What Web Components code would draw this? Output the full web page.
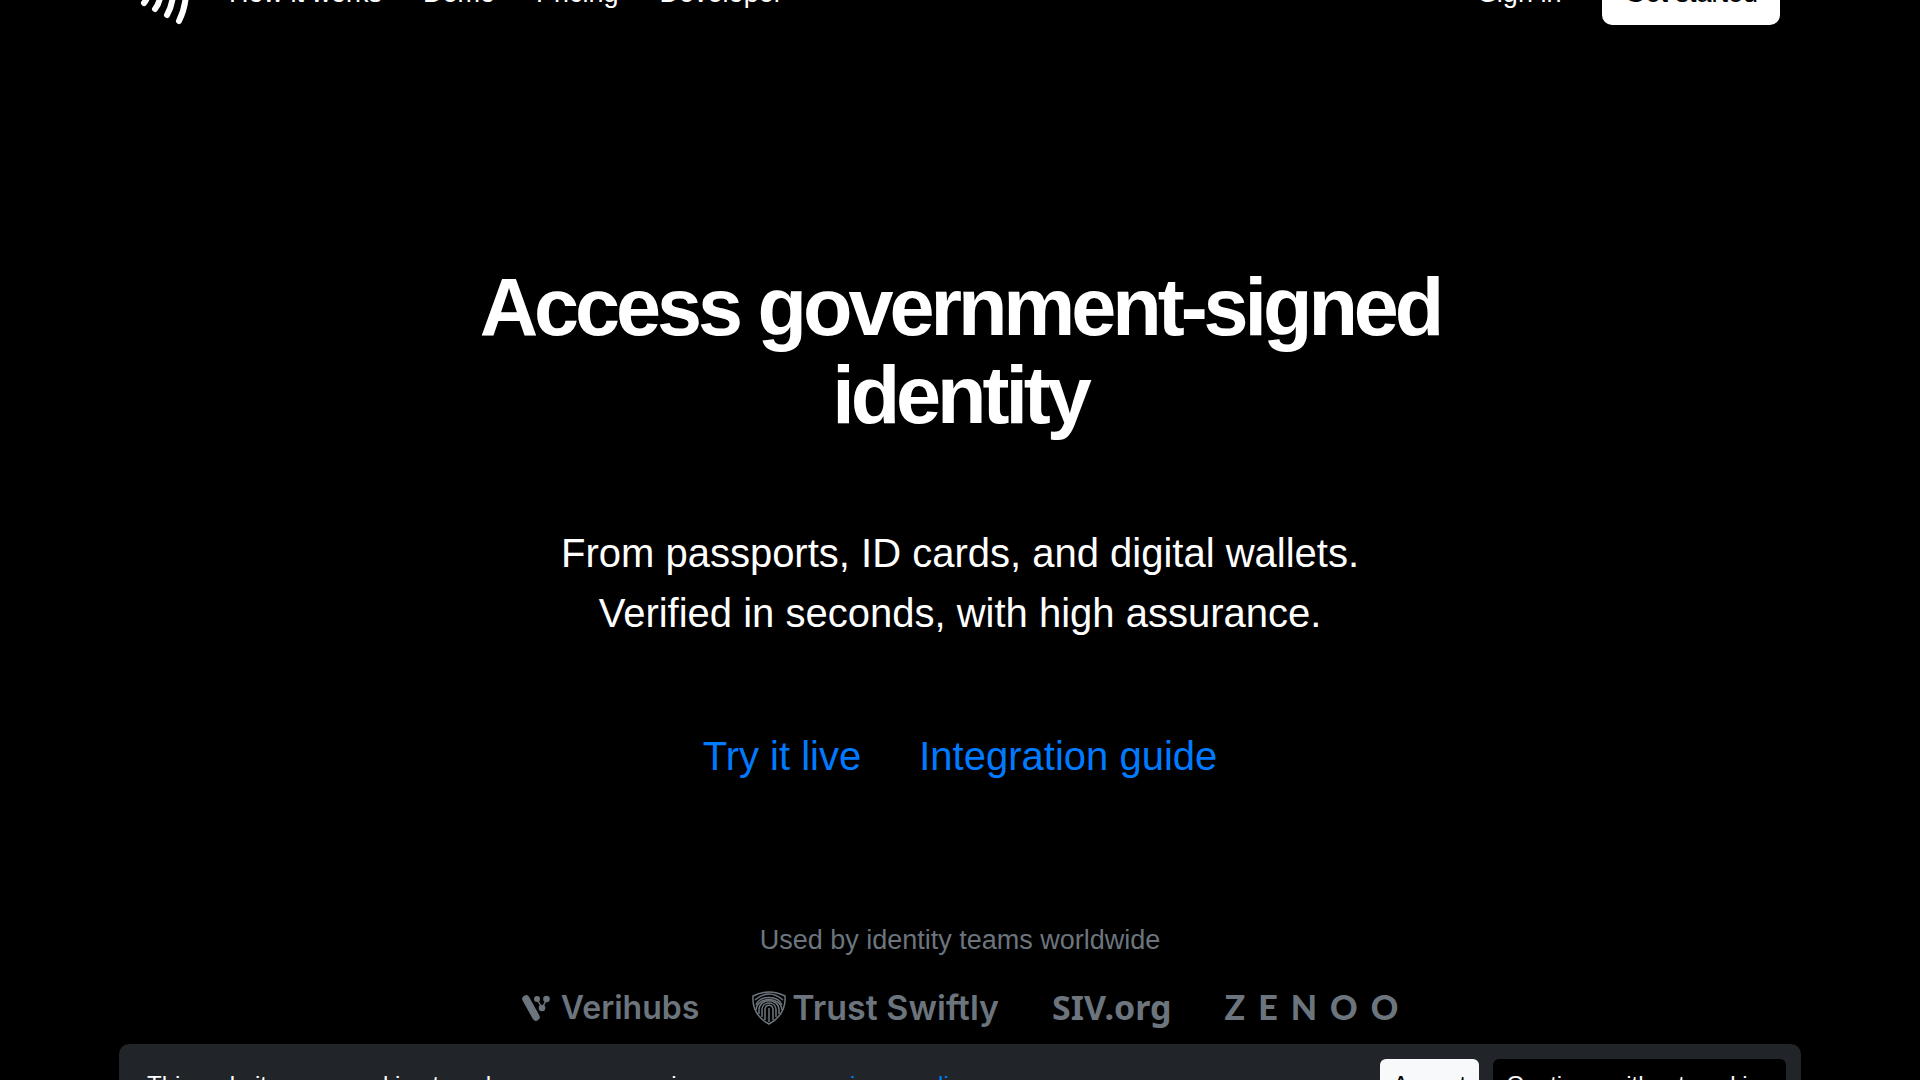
<!DOCTYPE html>
<html lang="en">
<head>
<meta charset="utf-8">
<title>Access government-signed identity</title>
<style>
  html, body { margin: 0; height: 100%; background: #000; }
  body { overflow: hidden; color: #fff; font-family: "Liberation Sans", Arial, sans-serif; }
</style>
</head>
<body>
<site-page></site-page>
<script>
const define = (name, html) => customElements.define(name, class extends HTMLElement {
  constructor() {
    super();
    this.attachShadow({ mode: 'open' }).innerHTML = html;
  }
});

define('wave-logo', `
<style>
  :host { display: block; }
  svg { display: block; width: 52px; height: 56px; overflow: visible; }
</style>
<svg viewBox="0 0 52 56" fill="none" stroke="#fff" stroke-width="6" stroke-linecap="round" role="img" aria-label="Home">
  <path d="M8 38 Q14 31 11 19"/>
  <path d="M19 44 Q27 34 24 15"/>
  <path d="M31 50 Q40 34 36 12"/>
  <path d="M43 56 Q53 36 49 10"/>
</svg>`);

define('site-header', `
<style>
  :host { display: block; margin-top: -40px; }
  header { display: flex; align-items: center; justify-content: space-between; padding: 0 140px 0 136px; }
  nav { display: flex; align-items: center; gap: 41px; font-size: 27px; line-height: 40px; }
  a { color: #fff; text-decoration: none; }
  .start { background: #fff; color: #000; border-radius: 10px; padding: 13px 22px 12px; }
</style>
<header>
  <nav aria-label="Main">
    <a href="#home" aria-label="Home"><wave-logo></wave-logo></a>
    <a href="#how">How it works</a>
    <a href="#demo">Demo</a>
    <a href="#pricing">Pricing</a>
    <a href="#developer">Developer</a>
  </nav>
  <nav aria-label="Account">
    <a href="#signin">Sign in</a>
    <a class="start" href="#start">Get started</a>
  </nav>
</header>`);

define('hero-section', `
<style>
  :host { display: block; text-align: center; padding: 0 24px; }
  h1 { margin: 0 auto; max-width: 1120px; font-size: 81px; line-height: 88px; letter-spacing: -0.05em; }
  p { margin: 84px 0 0; font-size: 40px; line-height: 60px; }
  .links { display: flex; justify-content: center; gap: 58px; margin-top: 83px; font-size: 40px; line-height: 60px; }
  ::slotted(a) { color: #007bff; text-decoration: none; }
</style>
<h1><slot name="title"></slot></h1>
<p><slot></slot></p>
<div class="links"><slot name="link"></slot></div>`);

define('verihubs-logo', `
<style>
  :host { display: flex; align-items: center; gap: 11px; font: 600 32px/40px Inter, sans-serif; }
  svg { width: 28px; height: 26px; }
</style>
<svg viewBox="0 0 28 26" fill="currentColor" stroke="currentColor" aria-hidden="true">
  <path d="M4 4 L14 22" stroke-width="7.500" stroke-linecap="round" fill="none"/>
  <path d="M15 4 L20 13 L25 4" stroke-width="1.500" fill="none"/>
  <circle cx="15" cy="4" r="3" stroke="none"/><circle cx="24.500" cy="4" r="3.300" stroke="none"/><circle cx="20" cy="13" r="3.300" stroke="none"/>
</svg>
<span>Verihubs</span>`);

define('trust-swiftly-logo', `
<style>
  :host { display: flex; align-items: center; gap: 6px; font: 600 34px/40px Inter, sans-serif; }
  svg { width: 34px; height: 34px; }
</style>
<svg viewBox="0 0 34 34" fill="none" stroke="currentColor" stroke-width="1.500" aria-hidden="true">
  <path d="M1 5 Q17 -3 33 5 C34 18 28 27 17 33 C6 27 0 18 1 5Z"/>
  <path d="M3 9 Q17 -3 31 9"/>
  <path d="M4 14 C8 4 26 4 30 14"/>
  <path d="M4 19 C5 5 29 5 30 19"/>
  <path d="M7 23 V18 C8 7 26 7 27 18 V23"/>
  <path d="M10 26 V18 C11 10 23 10 24 18 V26"/>
  <path d="M13 29 V18 C14 13 20 13 21 18 V29"/>
  <path d="M17 17 V31"/>
</svg>
<span>Trust Swiftly</span>`);

define('siv-logo', `
<style>:host { display: block; font: 700 34px/36px "Noto Sans", sans-serif; margin-bottom: 2px; }</style>
<span>SIV.org</span>`);

define('zenoo-logo', `
<style>:host { display: block; font: 900 34px/36px Lato, sans-serif; letter-spacing: 13px; margin: 0 -13px 2px 0; }</style>
<span>ZENOO</span>`);

define('customer-logos', `
<style>
  :host { display: block; color: #6c757d; text-align: center; margin-top: 134px; }
  p { margin: 0; font-size: 27px; line-height: 40px; }
  .row { display: flex; justify-content: center; align-items: center; gap: 53px; height: 40px; margin-top: 28px; }
</style>
<p>Used by identity teams worldwide</p>
<div class="row">
  <verihubs-logo></verihubs-logo>
  <trust-swiftly-logo></trust-swiftly-logo>
  <siv-logo></siv-logo>
  <zenoo-logo></zenoo-logo>
</div>`);

define('cookie-banner', `
<style>
  :host { display: block; margin: 16px 119px 0; }
  .bar { display: flex; align-items: center; gap: 14px; background: #212529; border-radius: 10px; padding: 15px 15px 15px 28px; font-size: 24px; line-height: 36px; }
  p { margin: 0; flex: 1; }
  a { color: #007bff; text-decoration: none; }
  button { font: inherit; border: 0; border-radius: 6px; padding: 8px 13px; }
  .accept { background: #f8f9fa; color: #000; }
  .decline { background: #000; color: #f8f9fa; }
</style>
<div class="bar" role="region" aria-label="Cookies">
  <p>This website uses cookies to enhance your experience, see our <a href="#privacy">privacy policy</a>.</p>
  <button class="accept">Accept</button>
  <button class="decline">Continue without cookies</button>
</div>`);

define('site-page', `
<style>
  :host { display: flow-root; }
  hero-section { margin-top: 238px; }
</style>
<site-header></site-header>
<main>
  <hero-section>
    <span slot="title">Access government-signed identity</span>
    From passports, ID cards, and digital wallets.<br>Verified in seconds, with high assurance.
    <a slot="link" href="#demo">Try it live</a>
    <a slot="link" href="#guide">Integration guide</a>
  </hero-section>
  <customer-logos></customer-logos>
</main>
<cookie-banner></cookie-banner>`);
</script>
</body>
</html>
